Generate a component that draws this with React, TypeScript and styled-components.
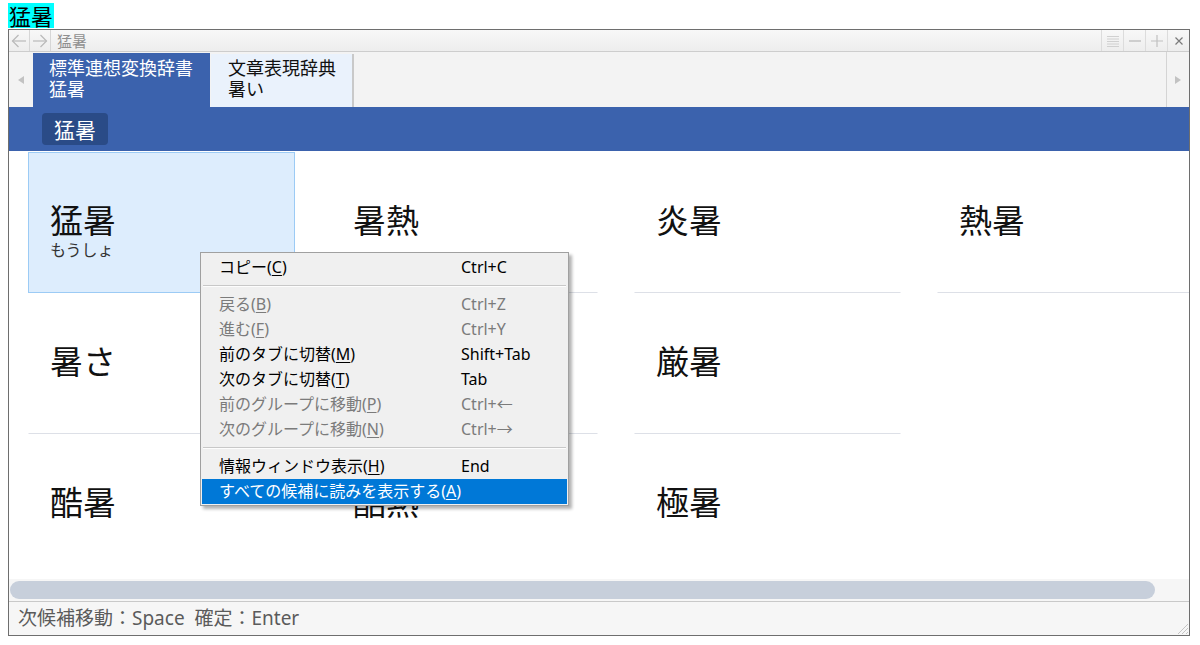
import React from 'react'
import styled, { createGlobalStyle } from 'styled-components'

const JP = `"Noto Sans CJK JP", "Noto Sans", sans-serif`
const UI = `"Noto Sans", "Noto Sans CJK JP", sans-serif`

const GlobalStyle = createGlobalStyle`
  html, body {
    margin: 0;
    padding: 0;
    background: #fff;
  }
  body {
    font-family: ${JP};
  }
`

const Page = styled.div`
  width: 1200px;
  height: 645px;
  box-sizing: border-box;
  padding: 3px 0 0 8px;
  overflow: hidden;
`

const Heading = styled.div`
  width: fit-content;
  background: #00ffff;
  color: #000;
  font-size: 22px;
  line-height: 25px;
  padding: 0 1px;
  margin-bottom: 1px;
`

const Window = styled.div`
  position: relative;
  width: 1182px;
  height: 607px;
  box-sizing: border-box;
  border: 1px solid #6e6e6e;
  display: flex;
  flex-direction: column;
  background: #fff;
`

const TitleBar = styled.div`
  height: 21px;
  flex: none;
  display: flex;
  align-items: stretch;
  border-bottom: 1px solid #cdcdcd;
  background: linear-gradient(#f8f8f8, #ededed);
`

const NavButton = styled.div`
  width: 20px;
  display: flex;
  align-items: center;
  justify-content: center;
  border-right: 1px solid #d6d6d6;
`

const Title = styled.div`
  flex: 1;
  padding-left: 6px;
  font-size: 15px;
  line-height: 21px;
  color: #8f8f8f;
`

const WinButton = styled.div`
  width: 21px;
  border-left: 1px solid #dcdcdc;
  display: flex;
  align-items: center;
  justify-content: center;
`

const TabRow = styled.div`
  height: 55px;
  flex: none;
  display: flex;
  background: #f3f3f3;
`

const ScrollArrow = styled.div<{ $side: 'left' | 'right' }>`
  width: ${p => (p.$side === 'left' ? '24px' : '22px')};
  display: flex;
  align-items: center;
  justify-content: center;
  ${p => (p.$side === 'right' ? 'border-left: 1px solid #d4d4d4;' : '')}
`

const Tab = styled.div<{ $active?: boolean; $width: number }>`
  width: ${p => p.$width}px;
  box-sizing: border-box;
  margin-top: ${p => (p.$active ? '1px' : '2px')};
  padding: ${p => (p.$active ? '4px 0 0 16px' : '3px 0 0 17px')};
  background: ${p => (p.$active ? '#3b62ad' : '#eaf2fc')};
  color: ${p => (p.$active ? '#fff' : '#111')};
  border-right: ${p => (p.$active ? '1px solid #f3f3f3' : '2px solid #c9c9c9')};
  font-size: 18px;
  line-height: 21px;
  white-space: nowrap;
`

const TabSpacer = styled.div`
  flex: 1;
`

const BlueBar = styled.div`
  height: 44px;
  flex: none;
  background: #3b62ad;
  padding-left: 33px;
  box-sizing: border-box;
  padding-top: 6px;
`

const Chip = styled.div`
  width: fit-content;
  height: 32px;
  padding: 0 12px;
  border-radius: 4px;
  background: #2a4b87;
  color: #fff;
  font-size: 21px;
  line-height: 32px;
`

const Content = styled.div`
  flex: 1;
  overflow: hidden;
`

const Grid = styled.div`
  display: grid;
  grid-template-rows: repeat(3, 141px);
  grid-auto-flow: column;
  grid-auto-columns: 267px;
  column-gap: 36px;
  padding: 1px 0 0 19px;
`

const Cell = styled.div<{ $selected?: boolean; $last?: boolean }>`
  box-sizing: border-box;
  padding: 47px 0 0 21px;
  border: 1px solid ${p => (p.$selected ? '#9ccbf5' : 'transparent')};
  border-bottom-color: ${p => (p.$selected ? '#9ccbf5' : p.$last ? 'transparent' : '#dde0e7')};
  background: ${p => (p.$selected ? '#ddedfd' : 'transparent')};
`

const Word = styled.div`
  font-size: 33px;
  line-height: 39px;
  color: #111;
`

const Reading = styled.div`
  font-size: 16px;
  line-height: 20px;
  color: #333;
`

const HScroll = styled.div`
  height: 23px;
  flex: none;
  box-sizing: border-box;
  background: #f6f6f6;
  border-bottom: 1px solid #c9c9c9;
  padding: 2px 0 0 1px;
`

const Thumb = styled.div`
  width: 1145px;
  height: 18px;
  border-radius: 9px;
  background: #c7cfdb;
`

const StatusBar = styled.div`
  height: 33px;
  flex: none;
  background: #f6f6f6;
  padding-left: 9px;
  font-family: ${UI};
  font-size: 19px;
  line-height: 33px;
  color: #5b5b5b;
  white-space: pre;
`

const Grip = styled.svg`
  position: absolute;
  right: 0;
  bottom: 0;
`

const Menu = styled.div`
  position: absolute;
  left: 191px;
  top: 222px;
  width: 369px;
  box-sizing: border-box;
  border: 1px solid #a0a0a0;
  background: #f0f0f0;
  padding: 2px 1px 1px;
  box-shadow: 3px 3px 3px rgba(0, 0, 0, 0.3);
  font-family: ${UI};
`

const Item = styled.div<{ $disabled?: boolean; $highlighted?: boolean }>`
  display: grid;
  grid-template-columns: 242px auto;
  height: 25px;
  padding-left: 17px;
  font-size: 16px;
  line-height: 25px;
  white-space: nowrap;
  color: ${p => (p.$highlighted ? '#fff' : p.$disabled ? '#7b7b7b' : '#000')};
  background: ${p => (p.$highlighted ? '#0078d7' : 'transparent')};
`

const Key = styled.span`
  text-decoration: underline;
  text-underline-offset: 2px;
`

const Separator = styled.div`
  height: 12px;
  margin: 0 1px;
  display: flex;
  flex-direction: column;
  justify-content: center;

  &::before {
    content: '';
    height: 1px;
    background: #c8c8c8;
  }
  &::after {
    content: '';
    height: 1px;
    background: #fdfdfd;
  }
`

const words: { word: string; reading?: string }[] = [
  { word: '猛暑', reading: 'もうしょ' },
  { word: '暑さ' },
  { word: '酷暑' },
  { word: '暑熱' },
  { word: '残暑' },
  { word: '酷熱' },
  { word: '炎暑' },
  { word: '厳暑' },
  { word: '極暑' },
  { word: '熱暑' },
]

type MenuEntry =
  | { sep: true }
  | { label: string; key: string; shortcut?: string; disabled?: boolean; highlighted?: boolean }

const menu: MenuEntry[] = [
  { label: 'コピー', key: 'C', shortcut: 'Ctrl+C' },
  { sep: true },
  { label: '戻る', key: 'B', shortcut: 'Ctrl+Z', disabled: true },
  { label: '進む', key: 'F', shortcut: 'Ctrl+Y', disabled: true },
  { label: '前のタブに切替', key: 'M', shortcut: 'Shift+Tab' },
  { label: '次のタブに切替', key: 'T', shortcut: 'Tab' },
  { label: '前のグループに移動', key: 'P', shortcut: 'Ctrl+←', disabled: true },
  { label: '次のグループに移動', key: 'N', shortcut: 'Ctrl+→', disabled: true },
  { sep: true },
  { label: '情報ウィンドウ表示', key: 'H', shortcut: 'End' },
  { label: 'すべての候補に読みを表示する', key: 'A', highlighted: true },
]

const Arrow = ({ dir }: { dir: 'left' | 'right' }) => (
  <svg width="16" height="14" viewBox="0 0 16 14">
    <g
      fill="none"
      stroke="#b9b9b9"
      strokeWidth="1.2"
      transform={dir === 'right' ? 'translate(16 0) scale(-1 1)' : undefined}
    >
      <path d="M1.5 7 H15" />
      <path d="M7.5 1 L1.5 7 L7.5 13" />
    </g>
  </svg>
)

const Triangle = ({ dir }: { dir: 'left' | 'right' }) => (
  <svg width="8" height="10" viewBox="0 0 8 10">
    <polygon
      points={dir === 'left' ? '7,1 7,9 1,5' : '1,1 1,9 7,5'}
      fill="#c2c2c2"
    />
  </svg>
)

const App = () => {
  return (
    <Page>
      <GlobalStyle />
      <Heading>猛暑</Heading>
      <Window>
        <TitleBar>
          <NavButton>
            <Arrow dir="left" />
          </NavButton>
          <NavButton>
            <Arrow dir="right" />
          </NavButton>
          <Title>猛暑</Title>
          <WinButton>
            <svg width="14" height="12" viewBox="0 0 14 12">
              <g stroke="#d0d0d0" strokeWidth="1">
                <path d="M1 1.5 H13 M1 4 H13 M1 6.5 H13 M1 9 H13 M1 11.5 H13" />
              </g>
            </svg>
          </WinButton>
          <WinButton>
            <svg width="14" height="12" viewBox="0 0 14 12">
              <path d="M1 6 H13" stroke="#b5b5b5" strokeWidth="1.2" />
            </svg>
          </WinButton>
          <WinButton>
            <svg width="14" height="14" viewBox="0 0 14 14">
              <path d="M1 7 H13 M7 1 V13" stroke="#c0c0c0" strokeWidth="1.2" />
            </svg>
          </WinButton>
          <WinButton>
            <svg width="10" height="10" viewBox="0 0 10 10">
              <path d="M1.5 1.5 L8.5 8.5 M8.5 1.5 L1.5 8.5" stroke="#7a7a7a" strokeWidth="1.2" />
            </svg>
          </WinButton>
        </TitleBar>

        <TabRow>
          <ScrollArrow $side="left">
            <Triangle dir="left" />
          </ScrollArrow>
          <Tab $active $width={178}>
            標準連想変換辞書
            <br />
            猛暑
          </Tab>
          <Tab $width={143}>
            文章表現辞典
            <br />
            暑い
          </Tab>
          <TabSpacer />
          <ScrollArrow $side="right">
            <Triangle dir="right" />
          </ScrollArrow>
        </TabRow>

        <BlueBar>
          <Chip>猛暑</Chip>
        </BlueBar>

        <Content>
          <Grid>
            {words.map((w, i) => (
              <Cell key={w.word} $selected={i === 0} $last={i % 3 === 2}>
                <Word>{w.word}</Word>
                {w.reading && <Reading>{w.reading}</Reading>}
              </Cell>
            ))}
          </Grid>
        </Content>

        <HScroll>
          <Thumb />
        </HScroll>

        <StatusBar>次候補移動：Space  確定：Enter</StatusBar>

        <Grip width="14" height="14" viewBox="0 0 14 14">
          <g stroke="#c4c4c4" strokeWidth="1">
            <path d="M13 3 L3 13 M13 7 L7 13 M13 11 L11 13" />
          </g>
        </Grip>

        <Menu>
          {menu.map((m, i) =>
            'sep' in m ? (
              <Separator key={i} />
            ) : (
              <Item key={i} $disabled={m.disabled} $highlighted={m.highlighted}>
                <span>
                  {m.label}(<Key>{m.key}</Key>)
                </span>
                <span>{m.shortcut}</span>
              </Item>
            ),
          )}
        </Menu>
      </Window>
    </Page>
  )
}

export default App
